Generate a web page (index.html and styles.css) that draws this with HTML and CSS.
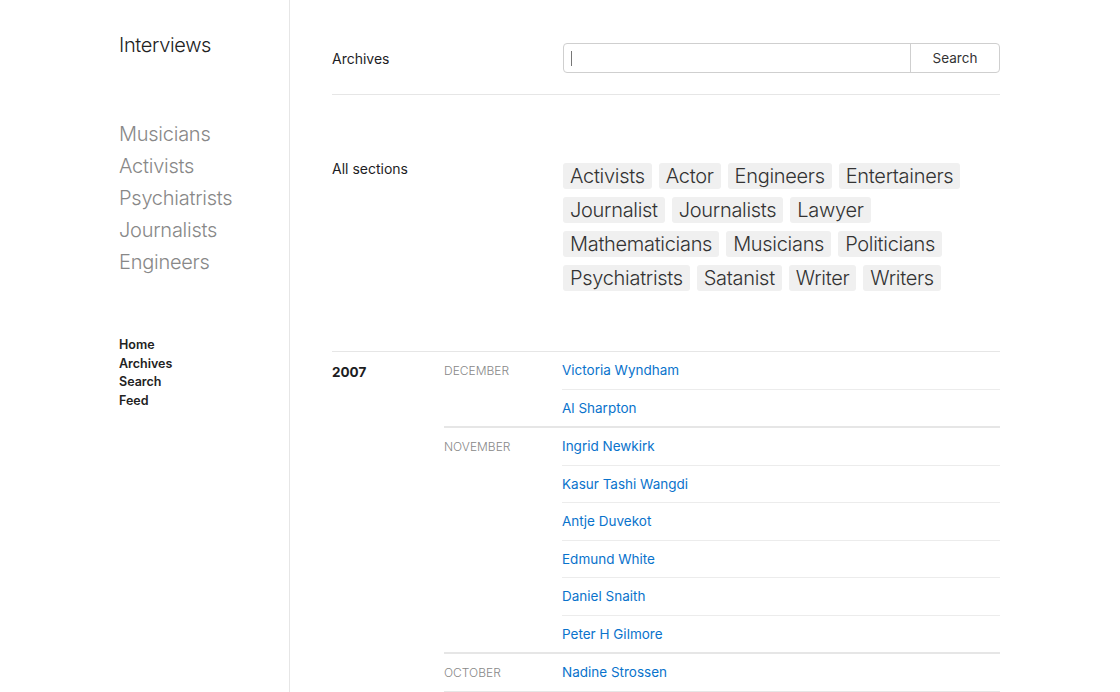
FILE: index.html
```html
<!DOCTYPE html>
<html lang="en">
<head>
<meta charset="utf-8">
<title>Archives — Interviews</title>
<link rel="stylesheet" href="styles.css">
</head>
<body>
<div class="page">
  <aside class="sidebar">
    <div class="site-title">Interviews</div>
    <ul class="cats">
      <li>Musicians</li>
      <li>Activists</li>
      <li>Psychiatrists</li>
      <li>Journalists</li>
      <li>Engineers</li>
    </ul>
    <ul class="nav">
      <li>Home</li>
      <li>Archives</li>
      <li>Search</li>
      <li>Feed</li>
    </ul>
  </aside>
  <main class="main">
    <header class="head">
      <div class="head-label">Archives</div>
      <form class="search">
        <div class="search-field"><span class="caret"></span></div>
        <div class="search-btn">Search</div>
      </form>
    </header>
    <section class="sections">
      <div class="sections-label">All sections</div>
      <div class="tags">
        <span class="tag">Activists</span>
        <span class="tag">Actor</span>
        <span class="tag">Engineers</span>
        <span class="tag">Entertainers</span>
        <span class="tag">Journalist</span>
        <span class="tag">Journalists</span>
        <span class="tag">Lawyer</span>
        <span class="tag">Mathematicians</span>
        <span class="tag">Musicians</span>
        <span class="tag">Politicians</span>
        <span class="tag">Psychiatrists</span>
        <span class="tag">Satanist</span>
        <span class="tag">Writer</span>
        <span class="tag">Writers</span>
      </div>
    </section>
    <section class="year">
      <div class="year-label">2007</div>
      <div class="months">
        <div class="month">
          <div class="month-label">DECEMBER</div>
          <ul class="entries">
            <li><a>Victoria Wyndham</a></li>
            <li><a>Al Sharpton</a></li>
          </ul>
        </div>
        <div class="month">
          <div class="month-label">NOVEMBER</div>
          <ul class="entries">
            <li><a>Ingrid Newkirk</a></li>
            <li><a>Kasur Tashi Wangdi</a></li>
            <li><a>Antje Duvekot</a></li>
            <li><a>Edmund White</a></li>
            <li><a>Daniel Snaith</a></li>
            <li><a>Peter H Gilmore</a></li>
          </ul>
        </div>
        <div class="month">
          <div class="month-label">OCTOBER</div>
          <ul class="entries">
            <li><a>Nadine Strossen</a></li>
          </ul>
        </div>
      </div>
    </section>
  </main>
</div>
</body>
</html>
```

FILE: styles.css
```css
* { box-sizing: border-box; }
html, body { margin: 0; padding: 0; }
body {
  font-family: "Inter", "Liberation Sans", sans-serif;
  color: #1d1d1f;
  background: #fff;
  height: 692px;
  overflow: hidden;
}
ul { list-style: none; margin: 0; padding: 0; }

.page {
  display: flex;
  min-height: 692px;
}

.sidebar {
  width: 290px;
  flex: none;
  border-right: 1px solid #e6e6e6;
  padding: 32px 0 0 119px;
}
.site-title {
  font-size: 20px;
  font-weight: 300;
  line-height: 26px;
  color: #222;
  letter-spacing: -0.35px;
}
.cats {
  margin-top: 60px;
}
.cats li {
  font-size: 20px;
  font-weight: 300;
  line-height: 32px;
  color: #888;
  letter-spacing: -0.25px;
}
.nav {
  margin-top: 58px;
}
.nav li {
  font-size: 12.5px;
  font-weight: 600;
  line-height: 18.7px;
  color: #222;
}

.main {
  width: 668px;
  margin-left: 42px;
  flex: none;
}

.head {
  display: flex;
  align-items: center;
  padding: 43px 0 21px;
  border-bottom: 1px solid #e6e6e6;
}
.head-label {
  width: 231px;
  font-size: 14px;
  font-weight: 400;
  color: #1d1d1f;
}
.search {
  flex: 1;
  display: flex;
  height: 30px;
  border: 1px solid #cfcfcf;
  border-radius: 4px;
  margin: 0;
}
.search-field {
  flex: 1;
  position: relative;
}
.caret {
  position: absolute;
  left: 7px;
  top: 7px;
  width: 1px;
  height: 15px;
  background: #777;
}
.search-btn {
  width: 89px;
  border-left: 1px solid #cfcfcf;
  display: flex;
  align-items: center;
  justify-content: center;
  font-size: 13.5px;
  color: #333;
}

.sections {
  display: flex;
  padding: 68px 0 60px;
  border-bottom: 1px solid #e6e6e6;
}
.sections-label {
  width: 231px;
  font-size: 14px;
  font-weight: 400;
  color: #1d1d1f;
  margin-top: -3px;
}
.tags {
  flex: 1;
  display: flex;
  flex-wrap: wrap;
  gap: 8px 7px;
}
.tag {
  background: #f0f0f0;
  border-radius: 3px;
  font-size: 20px;
  font-weight: 300;
  line-height: 26px;
  padding: 0 7px;
  color: #333;
  letter-spacing: -0.3px;
}

.year {
  display: flex;
}
.year-label {
  width: 112px;
  font-size: 13.5px;
  font-weight: 700;
  line-height: 18.5px;
  padding-top: 11px;
}
.months {
  flex: 1;
}
.month {
  display: flex;
  border-bottom: 2px solid #e6e6e6;
}
.month-label {
  width: 118px;
  font-size: 12px;
  font-weight: 300;
  color: #888;
  line-height: 18.5px;
  padding-top: 10px;
}
.entries {
  flex: 1;
}
.entries li {
  font-size: 13.5px;
  line-height: 18.5px;
  padding: 9.25px 0 8.75px;
  border-bottom: 1px solid #ececec;
}
.entries li:last-child { border-bottom: none; }
.entries a {
  color: #0a73cc;
  text-decoration: none;
}
```
